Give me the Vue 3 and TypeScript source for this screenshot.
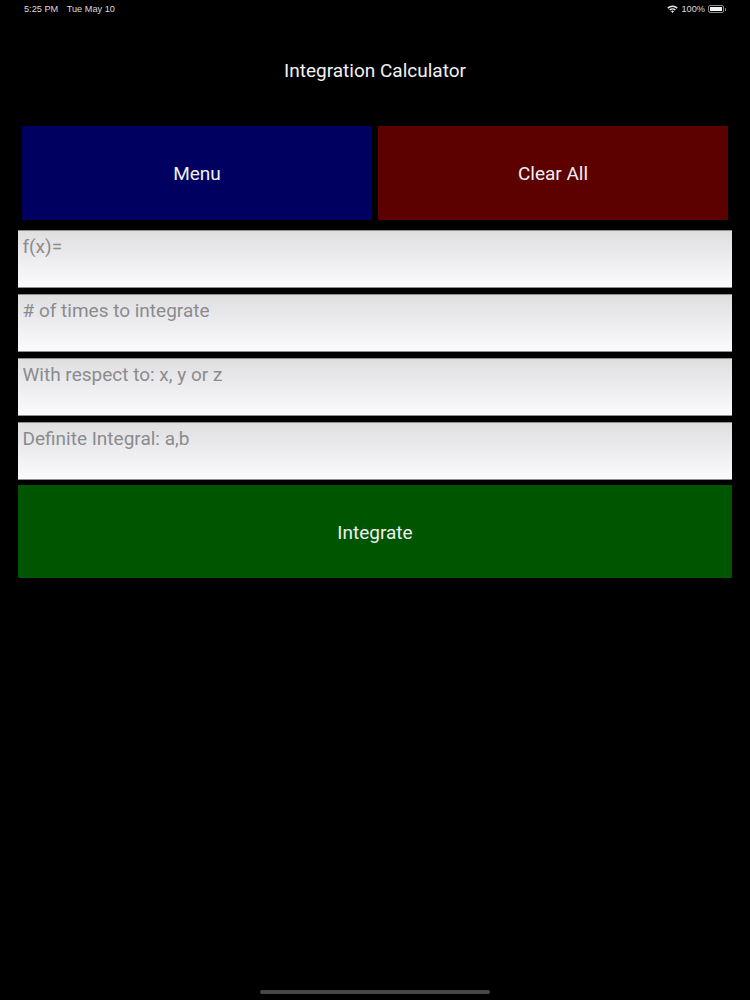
<script setup lang="ts">
const placeholders: string[] = [
  'f(x)=',
  '# of times to integrate',
  'With respect to: x, y or z',
  'Definite Integral: a,b',
]
</script>

<template>
  <div class="screen">
    <header class="status">
      <div class="status-left">
        <span>5:25 PM</span>
        <span>Tue May 10</span>
      </div>
      <div class="status-right">
        <svg class="wifi" width="11" height="8" viewBox="0 0 11 8">
          <path d="M0.3 2.6 A7.4 7.4 0 0 1 10.7 2.6 L9.7 3.7 A6 6 0 0 0 1.3 3.7 Z" fill="#e8e8e8" />
          <path d="M2.2 4.5 A4.7 4.7 0 0 1 8.8 4.5 L7.8 5.5 A3.3 3.3 0 0 0 3.2 5.5 Z" fill="#e8e8e8" />
          <path d="M4 6.3 A2.1 2.1 0 0 1 7 6.3 L5.5 7.9 Z" fill="#e8e8e8" />
        </svg>
        <span>100%</span>
        <span class="battery"><span class="battery-fill"></span></span>
      </div>
    </header>

    <h1 class="title">Integration Calculator</h1>

    <div class="top-buttons">
      <button class="btn menu">Menu</button>
      <button class="btn clear">Clear All</button>
    </div>

    <div class="fields">
      <input
        v-for="text in placeholders"
        :key="text"
        class="field"
        type="text"
        :placeholder="text"
      />
      <button class="btn integrate">Integrate</button>
    </div>

    <div class="home-indicator"></div>
  </div>
</template>

<style>
html,
body {
  margin: 0;
  background: #000;
}
</style>

<style scoped>
.screen {
  width: 750px;
  height: 1000px;
  background: #000;
  font-family: Roboto, "Liberation Sans", sans-serif;
  display: flex;
  flex-direction: column;
  position: relative;
  overflow: hidden;
}
.status {
  height: 18px;
  padding: 0 26px 0 24px;
  display: flex;
  justify-content: space-between;
  align-items: center;
  color: #dcdcdc;
  font-size: 9.2px;
  font-family: "Liberation Sans", Arial, sans-serif;
}
.status-left {
  display: flex;
  gap: 8.5px;
}
.status-right {
  display: flex;
  align-items: center;
  gap: 3px;
}
.wifi {
  margin-right: 1px;
}
.battery {
  width: 16px;
  height: 8px;
  border: 1px solid #8a8a8a;
  border-radius: 2px;
  display: block;
  box-sizing: border-box;
  padding: 1px;
  position: relative;
}
.battery::after {
  content: "";
  position: absolute;
  right: -3px;
  top: 1.5px;
  width: 1px;
  height: 3px;
  background: #8a8a8a;
}
.battery-fill {
  display: block;
  height: 100%;
  background: #f4f4f4;
}
.title {
  margin: 0;
  margin-top: 43px;
  height: 19px;
  line-height: 19px;
  font-size: 19px;
  font-weight: 400;
  color: #f2f2f2;
  text-align: center;
}
.top-buttons {
  margin-top: 46px;
  padding: 0 22px;
  display: flex;
  gap: 6px;
}
.btn {
  border: 0;
  padding: 0;
  height: 94px;
  font-family: inherit;
  font-size: 19px;
  color: #f0f0f0;
  text-align: center;
  border-radius: 1px;
}
.menu {
  flex: 1;
  background: #000060;
}
.clear {
  flex: 1;
  background: #5c0000;
}
.fields {
  margin-top: 10px;
  padding: 0 18px;
  display: flex;
  flex-direction: column;
  gap: 6px;
}
.field {
  display: block;
  box-sizing: border-box;
  width: 100%;
  height: 58px;
  border: 0;
  border-top: 1px solid #8f8f8f;
  border-bottom: 1px solid #8f8f8f;
  outline: 0;
  padding: 0 0 26px 4.5px;
  background: linear-gradient(#dfdfe1, #fbfbfd);
  font-family: inherit;
  font-size: 19px;
  color: #222;
}
.field::placeholder {
  color: #8b8b8e;
  opacity: 1;
}
.integrate {
  width: 100%;
  height: 93px;
  margin-top: -1px;
  padding-top: 1px;
  background: #005500;
}
.home-indicator {
  position: absolute;
  left: 260px;
  bottom: 6px;
  width: 230px;
  height: 4px;
  border-radius: 2px;
  background: #484848;
}
</style>
